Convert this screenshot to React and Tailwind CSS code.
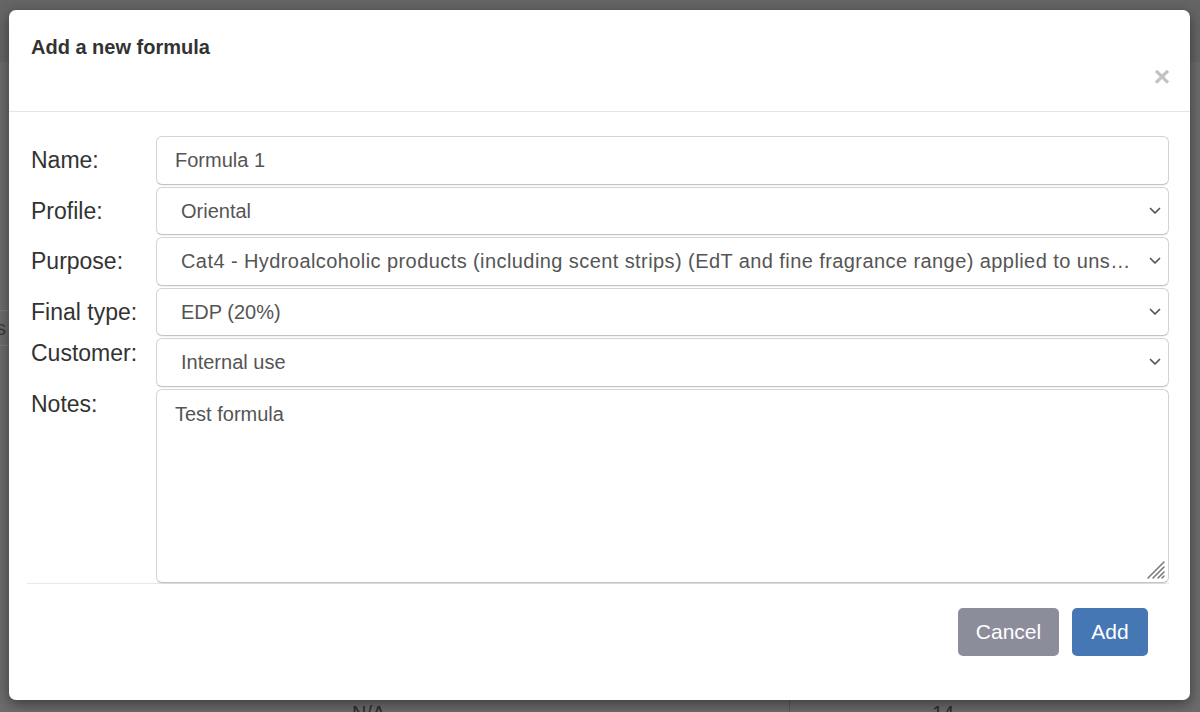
import React from "react";

function Chevron() {
  return (
    <svg width="12" height="8" viewBox="0 0 12 8" className="shrink-0">
      <path d="M1.5 1.5 L6 6 L10.5 1.5" fill="none" stroke="#555" strokeWidth="1.7" strokeLinecap="round" strokeLinejoin="round" />
    </svg>
  );
}

function Row({ label, children, align = "center", labelPad = "" }) {
  return (
    <div className={`flex ${align === "center" ? "items-center" : "items-start"}`}>
      <div className={`w-[125px] shrink-0 text-[23px] leading-[26px] text-[#333] ${labelPad}`}>{label}</div>
      <div className="flex-1 min-w-0">{children}</div>
    </div>
  );
}

function SelectBox({ value, wide = false }) {
  return (
    <div className="h-[48.5px] flex items-center gap-3 rounded-[6px] border border-[#d3d3d3] border-b-[#c4c4c4] bg-white pl-[24px] pr-[7px] text-[20px] text-[#555] shadow-[0_1px_1px_rgba(0,0,0,0.06)]">
      <span className={`flex-1 min-w-0 truncate ${wide ? "tracking-[0.42px]" : ""}`}>{value}</span>
      <Chevron />
    </div>
  );
}

export default function App() {
  return (
    <div className="relative w-[1200px] h-[712px] overflow-hidden bg-[#6c6c6c] font-['Liberation_Sans',Arial,sans-serif]">
      {/* faint backdrop page content */}
      <div className="absolute left-0 top-[0px] w-full h-[62px] bg-[#656565]" />
      <div className="absolute left-0 top-[310px] w-[10px] h-[1px] bg-[#7a7a7a]" />
      <div className="absolute left-0 top-[345px] w-[10px] h-[1px] bg-[#7a7a7a]" />
      <div className="absolute left-[-4px] top-[313px] text-[20px] text-[#3a3a3a]">s</div>
      <div className="absolute left-[352px] top-[698px] text-[20px] text-[#2e2e2e]">N/A</div>
      <div className="absolute left-[932px] top-[698px] text-[20px] text-[#2e2e2e]">14</div>
      <div className="absolute left-[789px] top-[700px] w-[1px] h-[12px] bg-[#5a5a5a]" />

      {/* modal */}
      <div className="absolute left-[9px] top-[10px] w-[1181px] h-[690px] rounded-[7px] bg-white shadow-[0_4px_14px_rgba(0,0,0,0.45)] flex flex-col">
        <div className="relative h-[102px] shrink-0 border-b border-[#e5e5e5] px-[22px]">
          <div className="pt-[26px] text-[20px] leading-[22px] font-bold text-[#333]">Add a new formula</div>
          <div className="absolute right-[20px] top-[53px] text-[28px] leading-[28px] font-bold text-[#c2c2c2]">×</div>
        </div>

        <div className="pt-[24px] pl-[22px] pr-[21px] flex flex-col gap-[2px]">
          <Row label="Name:">
            <div className="h-[48.5px] flex items-center rounded-[6px] border border-[#d3d3d3] border-b-[#c4c4c4] bg-white pl-[18px] text-[20px] text-[#555] shadow-[0_1px_1px_rgba(0,0,0,0.06)]">
              Formula 1
            </div>
          </Row>
          <Row label="Profile:">
            <SelectBox value="Oriental" />
          </Row>
          <Row label="Purpose:">
            <SelectBox wide value="Cat4 - Hydroalcoholic products (including scent strips) (EdT and fine fragrance range) applied to unshaved skin" />
          </Row>
          <Row label="Final type:">
            <SelectBox value="EDP (20%)" />
          </Row>
          <Row label="Customer:" align="start" labelPad="pt-[2px]">
            <SelectBox value="Internal use" />
          </Row>
          <Row label="Notes:" align="start" labelPad="pt-[2px]">
            <div className="relative h-[194px] rounded-[6px] border border-[#d3d3d3] border-b-[#c4c4c4] bg-white pl-[18px] pt-[12px] text-[20px] leading-[24px] text-[#555] shadow-[0_1px_1px_rgba(0,0,0,0.06)]">
              Test formula
              <svg className="absolute right-[2px] bottom-[2px]" width="22" height="22" viewBox="0 0 22 22">
                <path d="M20 4 L4 20 M20 9 L9 20 M20 14 L14 20 M20 18 L18 20" stroke="#7a7a7a" strokeWidth="1.6" strokeLinecap="round" />
              </svg>
            </div>
          </Row>
        </div>

        <div className="ml-[18px] mr-[21px] h-[1px] bg-[#e8e8e8]" />

        <div className="flex justify-end gap-[13px] pt-[24px] pr-[42px]">
          <button className="h-[48px] w-[101px] rounded-[5px] bg-[#8b8d9b] text-[21px] text-white">Cancel</button>
          <button className="h-[48px] w-[76px] rounded-[5px] bg-[#4577b4] text-[21px] text-white">Add</button>
        </div>
      </div>
    </div>
  );
}
